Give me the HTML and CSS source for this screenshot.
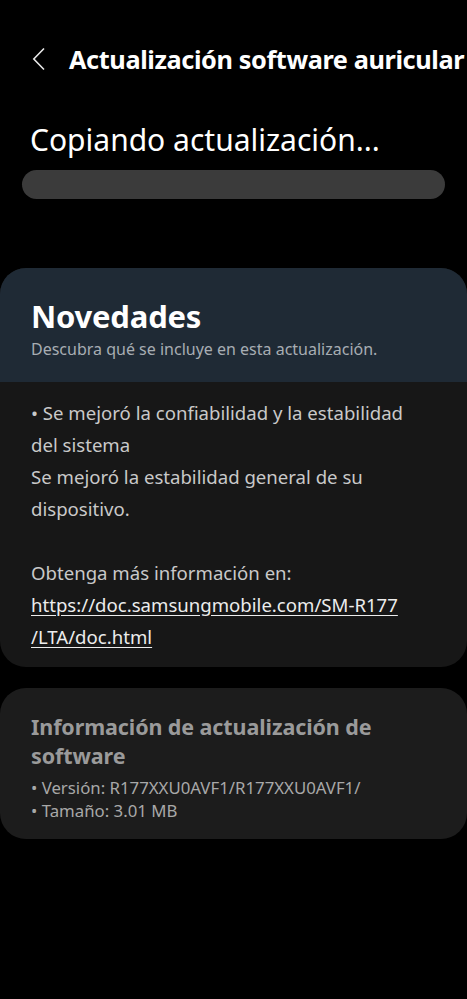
FILE: index.html
```html
<!DOCTYPE html>
<html lang="es">
<head>
<meta charset="utf-8">
<link rel="stylesheet" href="styles.css">
</head>
<body>
<div class="screen">
  <header class="topbar">
    <svg class="back" width="14" height="24" viewBox="0 0 14 24"><path d="M12 1.5 L1.8 12 L12 22.5" fill="none" stroke="#e8e8e8" stroke-width="1.6"/></svg>
    <h1 class="title">Actualización software auricular</h1>
  </header>
  <div class="status">Copiando actualización...</div>
  <div class="progress"></div>

  <section class="card news">
    <div class="news-head">
      <h2 class="news-title">Novedades</h2>
      <p class="news-sub">Descubra qué se incluye en esta actualización.</p>
    </div>
    <div class="news-body">
      <p>• Se mejoró la confiabilidad y la estabilidad del sistema<br>Se mejoró la estabilidad general de su dispositivo.</p>
      <p class="gap">Obtenga más información en:<br><a class="link">https://doc.samsungmobile.com/SM-R177<br>/LTA/doc.html</a></p>
    </div>
  </section>

  <section class="card info">
    <h2 class="info-title">Información de actualización de software</h2>
    <p class="info-line">• Versión: R177XXU0AVF1/R177XXU0AVF1/</p>
    <p class="info-line">• Tamaño: 3.01 MB</p>
  </section>
</div>
</body>
</html>
```

FILE: styles.css
```css
* { box-sizing: border-box; }
html, body { margin: 0; padding: 0; background: #000; }
body { font-family: "Noto Sans", "Open Sans", sans-serif; color: #fff; }
.screen { width: 467px; height: 999px; overflow: hidden; background: #000; }
.topbar { display: flex; align-items: center; height: 54px; margin-top: 32px; padding-left: 32px; gap: 23px; }
.back { flex: none; }
.title { margin: 0; font-size: 25.3px; font-weight: 700; white-space: nowrap; letter-spacing: -0.4px; }
.status { margin: 34px 0 0 30px; font-size: 30px; line-height: 40px; }
.progress { margin: 10px 22px 0 22px; height: 29px; border-radius: 15px; background: #3b3b3b; }
.card { border-radius: 26px; overflow: hidden; }
.news { margin-top: 69px; background: #171717; }
.news-head { background: #1f2a35; padding: 28px 31px 20px; height: 114px; }
.news-title { margin: 0; font-size: 31px; line-height: 40px; font-weight: 700; letter-spacing: -0.2px; }
.news-sub { margin: 2px 0 0; font-size: 16px; line-height: 22px; color: #a7adb3; }
.news-body { padding: 15px 50px 14px 31px; color: #c9c9c9; font-size: 18.6px; line-height: 32px; }
.news-body p { margin: 0; }
.news-body .gap { margin-top: 32px; }
.link { color: #ececec; text-decoration: underline; text-underline-offset: 3px; }
.info { margin-top: 21px; background: #1c1c1c; padding: 24px 31px 18px; height: 151px; }
.info-title { margin: 0; font-size: 21.5px; line-height: 29px; font-weight: 700; color: #9a9a9a; letter-spacing: -0.1px; }
.info-line { margin: 0; font-size: 16.8px; line-height: 23px; color: #a8a8a8; }
.info-title + .info-line { margin-top: 6px; }
```
